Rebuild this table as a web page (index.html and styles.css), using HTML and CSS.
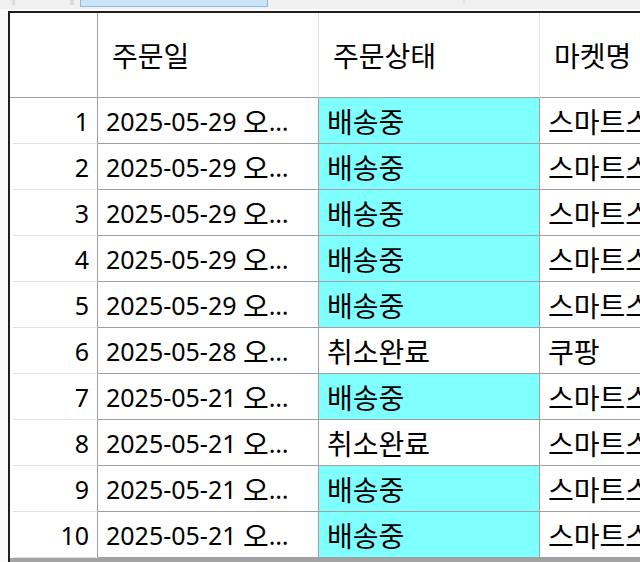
FILE: index.html
```html
<!DOCTYPE html>
<html lang="ko">
<head>
<meta charset="utf-8">
<link rel="stylesheet" href="styles.css">
</head>
<body>
<div class="strip">
  <span class="tick t1"></span>
  <span class="tick t2"></span>
  <span class="thumb"></span>
  <span class="tick t3"></span>
</div>
<div class="gap"></div>
<div class="grid-wrap">
  <div class="grid">
    <div class="hcell corner"></div>
    <div class="hcell"><span class="ko">주문일</span></div>
    <div class="hcell"><span class="ko">주문상태</span></div>
    <div class="hcell"><span class="ko">마켓명</span></div>

    <div class="rh">1</div><div class="c">2025-05-29 <span class="ko">오</span>…</div><div class="c cyan"><span class="ko">배송중</span></div><div class="c"><span class="ko">스마트스토어</span></div>
    <div class="rh">2</div><div class="c">2025-05-29 <span class="ko">오</span>…</div><div class="c cyan"><span class="ko">배송중</span></div><div class="c"><span class="ko">스마트스토어</span></div>
    <div class="rh">3</div><div class="c">2025-05-29 <span class="ko">오</span>…</div><div class="c cyan"><span class="ko">배송중</span></div><div class="c"><span class="ko">스마트스토어</span></div>
    <div class="rh">4</div><div class="c">2025-05-29 <span class="ko">오</span>…</div><div class="c cyan"><span class="ko">배송중</span></div><div class="c"><span class="ko">스마트스토어</span></div>
    <div class="rh">5</div><div class="c">2025-05-29 <span class="ko">오</span>…</div><div class="c cyan"><span class="ko">배송중</span></div><div class="c"><span class="ko">스마트스토어</span></div>
    <div class="rh">6</div><div class="c">2025-05-28 <span class="ko">오</span>…</div><div class="c"><span class="ko">취소완료</span></div><div class="c"><span class="ko">쿠팡</span></div>
    <div class="rh">7</div><div class="c">2025-05-21 <span class="ko">오</span>…</div><div class="c cyan"><span class="ko">배송중</span></div><div class="c"><span class="ko">스마트스토어</span></div>
    <div class="rh">8</div><div class="c">2025-05-21 <span class="ko">오</span>…</div><div class="c"><span class="ko">취소완료</span></div><div class="c"><span class="ko">스마트스토어</span></div>
    <div class="rh">9</div><div class="c">2025-05-21 <span class="ko">오</span>…</div><div class="c cyan"><span class="ko">배송중</span></div><div class="c"><span class="ko">스마트스토어</span></div>
    <div class="rh">10</div><div class="c">2025-05-21 <span class="ko">오</span>…</div><div class="c cyan"><span class="ko">배송중</span></div><div class="c"><span class="ko">스마트스토어</span></div>
  </div>
  <div class="fill"></div>
</div>
</body>
</html>
```
FILE: styles.css
```css
html, body {
  margin: 0;
  padding: 0;
  width: 640px;
  height: 562px;
  overflow: hidden;
  background: #fafafa;
  font-family: "Noto Sans", "Noto Sans CJK KR", sans-serif;
  color: #000;
}
body {
  display: flex;
  flex-direction: column;
}
.strip {
  height: 9px;
  background: #f0f0f0;
  display: flex;
  align-items: flex-start;
  flex: none;
}
.tick {
  height: 5px;
  background: #dcdcdc;
}
.t1 { width: 3px; margin-left: 12px; }
.t2 { width: 4px; margin-left: 55px; }
.thumb {
  margin-left: 6px;
  width: 188px;
  height: 7px;
  box-sizing: border-box;
  background: #cce4f7;
  border: 1px solid #8cbbe6;
  border-top: none;
}
.t3 { width: 2px; margin-left: 195px; height: 4px; background: #e4e4e4; }
.gap {
  height: 2px;
  flex: none;
}
.grid-wrap {
  flex: 1;
  margin-left: 8px;
  border-left: 2px solid #1e1e1e;
  border-top: 2px solid #1e1e1e;
  display: flex;
  flex-direction: column;
  overflow: hidden;
  background: #fff;
}
.grid {
  display: grid;
  grid-template-columns: 88px 221px 221px 240px;
  grid-template-rows: 85px repeat(10, 46px);
  font-size: 25px;
  line-height: 1;
  flex: none;
}
.grid > div {
  display: flex;
  align-items: center;
  box-sizing: border-box;
  white-space: pre;
  overflow: hidden;
}
.ko {
  font-family: "Noto Sans CJK KR", sans-serif;
  font-size: 28px;
  line-height: 1;
}
.hcell {
  background: #fff;
  border-right: 1px solid #e2e2e2;
  border-bottom: 1px solid #a0a0a0;
  padding-left: 14px;
}
.hcell.corner {
  border-right: 1px solid #a0a0a0;
}
.rh {
  justify-content: flex-end;
  padding-right: 8px;
  border-right: 1px solid #a0a0a0;
  border-bottom: 1px solid transparent;
  background: linear-gradient(#e2e2e2, #e2e2e2) no-repeat;
  background-origin: border-box;
  background-position: 3px 100%;
  background-size: calc(100% - 3px) 1px;
  padding-top: 2px;
}
.c {
  padding-left: 8px;
  padding-top: 1px;
  border-right: 1px solid #a0a0a0;
  border-bottom: 1px solid #a0a0a0;
  background: #fff;
}
.c.cyan {
  background: #80ffff;
}
.fill {
  flex: 1;
  background: #a3a3a3;
}
```
